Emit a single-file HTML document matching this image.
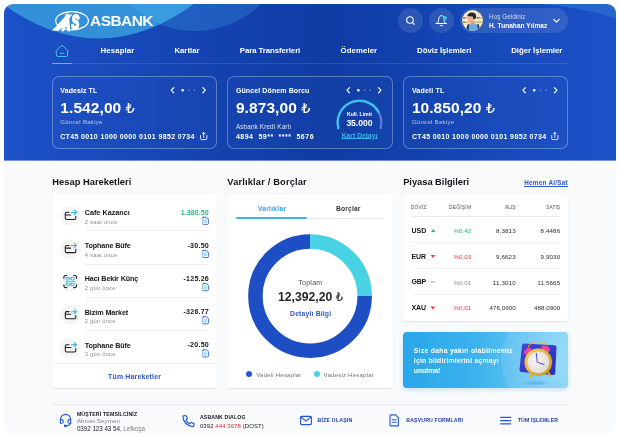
<!DOCTYPE html>
<html lang="tr"><head><meta charset="utf-8"><title>Asbank</title>
<style>
*{box-sizing:border-box;margin:0;padding:0}
html,body{width:620px;height:437px;background:#fff;overflow:hidden}
body{font-family:"Liberation Sans","DejaVu Sans",sans-serif;color:#15171c;position:relative}
#app{position:absolute;left:4px;top:4px;width:612px;height:428.8px;border-radius:9px;background:#f9fafc;overflow:hidden}
#p{position:absolute;left:-4px;top:-4px;width:620px;height:437px;will-change:transform}
.a{position:absolute;white-space:pre;line-height:1}
.card{position:absolute;background:#fff;border-radius:3.5px;box-shadow:0 .8px 1.6px rgba(30,30,50,.10)}
.hc{position:absolute;top:76px;height:72.9px;border:1px solid rgba(255,255,255,.3);border-radius:7px;background:rgba(255,255,255,.015)}
.ln{position:absolute;height:1px;background:#efeff3}
.ic{position:absolute;width:20.4px;height:20.4px;border-radius:50%;background:#f5f5f6}
</style></head><body>
<div id="app"><div id="p">
<!-- header background -->
<svg class="a" style="left:0;top:0" width="620" height="161" viewBox="0 0 620 161">
 <defs>
  <linearGradient id="hg" x1="4" x2="616" gradientUnits="userSpaceOnUse"><stop offset="0" stop-color="#1d51c8"/><stop offset=".26" stop-color="#1646b5"/><stop offset=".53" stop-color="#0f3ba4"/><stop offset=".79" stop-color="#1548b8"/><stop offset="1" stop-color="#1d51c8"/></linearGradient>
  <linearGradient id="e2" x1="120" x2="262" gradientUnits="userSpaceOnUse"><stop offset="0" stop-color="#2b76d2"/><stop offset=".55" stop-color="#2463c9"/><stop offset="1" stop-color="#1c50bf"/></linearGradient>
  <linearGradient id="e1" x1="4" x2="196" gradientUnits="userSpaceOnUse"><stop offset="0" stop-color="#328fd8"/><stop offset="1" stop-color="#3392d9"/></linearGradient>
 </defs>
 <rect x="0" y="0" width="620" height="160.6" fill="url(#hg)"/>
 <path d="M-11.7 -7.1 Q98.3 84.3 208.3 -7.1Z" fill="url(#e1)"/>
 <ellipse cx="195" cy="-50" rx="88" ry="81" fill="rgba(80,200,255,.2)"/>
 <path d="M533 3.6 Q580 6.6 616 18.6 L620 18.6 L620 0 L533 0Z" fill="#2567cd"/>
</svg>
<!-- logo emblem -->
<svg class="a" style="left:48px;top:6px" width="50" height="30" viewBox="48 6 50 30">
 <ellipse cx="72.05" cy="20.7" rx="16.35" ry="9.1" fill="none" stroke="#fff" stroke-width="1.2"/>
 <path d="M52 30.7 L66.9 14.4 L72.4 14.4 L58.9 30.7Z" fill="#fff"/>
 <g font-family="Liberation Sans, sans-serif" font-weight="bold" font-style="italic" fill="#fff" stroke="#fff" stroke-linejoin="round">
  <text transform="translate(62.3 30.3) scale(.5 1)" font-size="22.4" stroke-width="2.6">A</text>
  <text transform="translate(71.5 29.4) scale(.56 1)" font-size="20.6" stroke-width="2.2">S</text>
 </g>
</svg>
<!-- top-right controls -->
<div class="a" style="left:397.8px;top:8.2px;width:25.2px;height:25.2px;border-radius:50%;background:rgba(255,255,255,.11)"></div>
<div class="a" style="left:428.8px;top:8.2px;width:25.2px;height:25.2px;border-radius:50%;background:rgba(255,255,255,.11)"></div>
<div class="a" style="left:460.3px;top:8px;width:108px;height:25px;border-radius:13px;background:rgba(255,255,255,.11)"></div>
<svg class="a" style="left:404.2px;top:14.4px" width="13" height="13" viewBox="0 0 13 13" fill="none" stroke="#fff" stroke-width="1.1" stroke-linecap="round"><circle cx="6" cy="6" r="3.3"/><path d="M8.5 8.6 L10.2 10.3"/></svg>
<svg class="a" style="left:433px;top:12px" width="17" height="17" viewBox="433 12 17 17" fill="none" stroke="#fff" stroke-width="1" stroke-linecap="round" stroke-linejoin="round"><path d="M436.2 23.5 C438.4 23.2 438.5 21.5 438.7 19.2 C438.9 17 439.9 15.7 441.6 15.7 C442.4 15.7 443 16 443.4 16.4 M444.3 20.6 C444.4 22.2 444.8 23.2 446.2 23.5 M436 23.5 H446.3 M440.2 25.6 H442.5"/><circle cx="444.9" cy="18" r="1.95" fill="#3fd0ee" stroke="none"/></svg>
<!-- avatar -->
<svg class="a" style="left:461.9px;top:10.1px" width="21" height="21" viewBox="0 0 21 21">
 <defs><clipPath id="av"><circle cx="10.5" cy="10.5" r="10.4"/></clipPath></defs>
 <g clip-path="url(#av)">
  <rect width="21" height="21" fill="#fae7c0"/>
  <rect x="0" y="3.4" width="21" height="1.2" fill="#e9dcc0"/>
  <rect x="0" y="7.2" width="21" height="1.3" fill="#b9b39c"/>
  <rect x="1" y="7.2" width="2" height="1.3" fill="#6b7068"/><rect x="14.5" y="7.2" width="3" height="1.3" fill="#7d8078"/>
  <rect x="0" y="11.6" width="21" height="1.2" fill="#c9b88a"/>
  <rect x="0.5" y="11.6" width="3" height="1.2" fill="#7c7a66"/><rect x="15" y="11.6" width="4" height="1.2" fill="#d8b552"/>
  <path d="M3.4 21 C3.8 16 6 13.4 10 13.2 C14.6 13 17.2 15.4 17.6 21Z" fill="#68abe0"/>
  <path d="M8.8 11.6 L12 11 L12.2 13.6 L10.4 15.2 L8.6 13.4Z" fill="#dd9672"/>
  <path d="M4.8 19.4 L5.4 14.8 L7 13.9 L7 19.8Z M15.2 13.7 L17 14.5 L17.6 18.4 L15.8 18.8Z" fill="#2c385a"/>
  <path d="M6 6 C7 6.4 9 6.6 10.4 6.2 C11 7 11.4 8 11.6 9.6 C11.5 11.4 10.2 13 8.7 13 C7 12.8 6 10.6 5.8 8.6Z" fill="#efb194"/>
  <path d="M5.2 6.8 C5.3 3.6 8 2.3 10.4 2.4 C13 2.5 14.5 4.4 14.1 6.9 C13.8 8.5 13 9.3 11.6 9.5 C11.4 8 11 7 10.4 6.2 C9 6.6 7 6.4 6 6Z" fill="#26262e"/>
 </g>
</svg>
<svg class="a" style="left:551.5px;top:17.7px" width="9" height="6" viewBox="0 0 9 6" fill="none" stroke="#fff" stroke-width="1.1" stroke-linecap="round" stroke-linejoin="round"><path d="M1.7 1.3 L4.5 4.1 L7.3 1.3"/></svg>
<!-- nav -->
<svg class="a" style="left:54px;top:43px" width="16" height="16" viewBox="54 43 16 16" fill="none" stroke="#46c4ee" stroke-width="1" stroke-linejoin="round" stroke-linecap="round"><path d="M56.4 50.2 L62 45.2 L67.6 50.2 V55.2 Q67.6 56.5 66.3 56.5 H57.7 Q56.4 56.5 56.4 55.2Z"/><path d="M60.5 53.3 H63.5"/></svg>
<div class="a" style="left:52px;top:63.4px;width:516px;height:.8px;background:rgba(255,255,255,.11)"></div>
<div class="a" style="left:52px;top:62.6px;width:20px;height:1.6px;border-radius:1px;background:#46c4ee"></div>
<!-- header cards -->
<div class="hc" style="left:52px;width:165.3px"></div>
<div class="hc" style="left:227px;width:165.6px"></div>
<div class="hc" style="left:403.2px;width:164.6px"></div>
<!-- header card widgets -->
<svg class="a" style="left:0;top:70px" width="620" height="90" viewBox="0 70 620 90" fill="none" stroke="#fff" stroke-linecap="round" stroke-linejoin="round">
 <g id="pg" stroke-width="1.15">
  <path d="M173.8 87.6 L171.3 90.25 L173.8 92.9"/><path d="M202.8 87.6 L205.3 90.25 L202.8 92.9"/>
  <circle cx="182.6" cy="90.2" r="1.25" fill="#fff" stroke="none"/><circle cx="188.9" cy="90.2" r=".7" fill="#fff" fill-opacity=".45" stroke="none"/><circle cx="194.4" cy="90.2" r=".7" fill="#fff" fill-opacity=".45" stroke="none"/>
 </g>
 <use href="#pg" x="175.7"/><use href="#pg" x="351.6"/>
 <g id="sh" stroke-width=".85"><path d="M200.5 135.4 V138.6 Q200.5 139.6 201.5 139.6 H205.8 Q206.8 139.6 206.8 138.6 V135.4 M203.65 137.4 V132.5 M202.25 133.75 L203.65 132.35 L205.05 133.75"/></g>
 <use href="#sh" x="351.2"/>
 <!-- gauge -->
 <path d="M338.4 128.1 A21.8 21.8 0 1 1 380.6 128.1" stroke="#5b7cd6" stroke-width="2.2"/>
 <path d="M338.4 128.1 A21.8 21.8 0 0 1 378.4 111.7" stroke="#38c2ea" stroke-width="2.2"/>
</svg>
<!-- body cards -->
<div class="card" style="left:52px;top:194px;width:165.2px;height:193.6px"></div>
<div class="card" style="left:227.3px;top:194px;width:165.3px;height:193.6px"></div>
<div class="card" style="left:403px;top:194px;width:164.8px;height:127px"></div>
<!-- left list -->
<div class="ic" style="left:60px;top:205.6px"></div>
<div class="ic" style="left:60px;top:238.7px"></div>
<div class="ic" style="left:60px;top:271.8px"></div>
<div class="ic" style="left:60px;top:304.9px"></div>
<div class="ic" style="left:60px;top:338px"></div>
<div class="ln" style="left:84.7px;top:230.4px;width:124.5px"></div>
<div class="ln" style="left:84.7px;top:263.6px;width:124.5px"></div>
<div class="ln" style="left:84.7px;top:296.8px;width:124.5px"></div>
<div class="ln" style="left:84.7px;top:330px;width:124.5px"></div>
<div class="ln" style="left:52px;top:363.2px;width:165.2px"></div>
<svg class="a" style="left:0;top:190px" width="230" height="200" viewBox="0 190 230 200" fill="none" stroke-linecap="round" stroke-linejoin="round">
 <g id="tr" stroke-width="1.05">
  <path d="M69 212.3 H66.5 Q65.3 212.3 65.3 213.5 V218.3 Q65.3 219.5 66.5 219.5 H74.6 Q75.8 219.5 75.8 218.3 V216.2 M65.5 215 H70.8" stroke="#1c1d22"/>
  <path d="M71.3 212.4 H76.3 M74.3 210.2 L76.5 212.4 L74.3 214.6" stroke="#2eb5d8"/>
 </g>
 <use href="#tr" y="33.1"/><use href="#tr" y="99.3"/><use href="#tr" y="132.4"/>
 <!-- qr icon -->
 <g stroke-width="1.05">
  <path d="M63.9 278.2 V277 Q63.9 275.4 65.5 275.4 H66.7 M73.7 275.4 H74.9 Q76.5 275.4 76.5 277 V278.2 M76.5 284.8 V286 Q76.5 287.6 74.9 287.6 H73.7 M66.7 287.6 H65.5 Q63.9 287.6 63.9 286 V284.8" stroke="#1c1d22"/>
  <g stroke="#2eb5d8" stroke-width=".9">
   <rect x="66.2" y="277.4" width="2.9" height="2.7" rx=".5"/><rect x="71.3" y="277.4" width="2.9" height="2.7" rx=".5"/>
   <rect x="66.2" y="283.1" width="2.9" height="2.7" rx=".5"/><rect x="71.3" y="283.1" width="2.9" height="2.7" rx=".5"/>
   <path d="M66 281.6 H67.4 M69.2 281.6 H71.2 M73 281.6 H74.4 M70.2 277.6 V279.4 M70.2 283.6 V285.6"/>
  </g>
 </g>
 <!-- doc icons -->
 <g id="dc" stroke-width=".85">
  <path d="M203.3 217.2 H206.5 L208.4 219.1 V223.5 Q208.4 224.4 207.5 224.4 H203.5 Q202.6 224.4 202.6 223.5 V217.9 Q202.6 217.2 203.3 217.2Z" fill="#fff" stroke="#2a57c8"/>
  <path d="M202.6 218.4 V223.4" stroke="#b4c3ee" stroke-width=".9"/>
  <rect x="203.9" y="218.9" width="2.9" height="4.2" fill="#a3e2ee" stroke="none"/>
 </g>
 <use href="#dc" y="33.15"/><use href="#dc" y="66.3"/><use href="#dc" y="99.45"/><use href="#dc" y="132.6"/>
</svg>
<!-- middle card -->
<div class="a" style="left:235.8px;top:217.6px;width:148.5px;height:.9px;background:#e6e7ec"></div>
<div class="a" style="left:235.8px;top:217.2px;width:71.2px;height:1.5px;border-radius:1px;background:#44aee8"></div>
<svg class="a" style="left:240px;top:226px" width="140" height="140" viewBox="240 226 140 140" fill="none">
 <path d="M364.67 296.05 A54.62 54.62 0 1 1 310.05 241.43" stroke="#1e4ec4" stroke-width="14.55"/>
 <path d="M310.05 241.43 A54.62 54.62 0 0 1 364.67 296.05" stroke="#49d2e4" stroke-width="14.55"/>
</svg>
<div class="a" style="left:246px;top:371.3px;width:6px;height:6px;border-radius:50%;background:#2359d6"></div>
<div class="a" style="left:313.8px;top:371.3px;width:6px;height:6px;border-radius:50%;background:#47d0e6"></div>
<!-- table -->
<div class="ln" style="left:410.8px;top:215.8px;width:148.8px;background:#ebebef"></div>
<div class="ln" style="left:410.8px;top:241.9px;width:148.8px;background:#f2f2f5"></div>
<div class="ln" style="left:410.8px;top:267.9px;width:148.8px;background:#f2f2f5"></div>
<div class="ln" style="left:410.8px;top:293.8px;width:148.8px;background:#f3f3f6"></div>
<svg class="a" style="left:428px;top:224px" width="12" height="90" viewBox="428 224 12 90">
 <path d="M430.8 231.9 L433.2 228.9 L435.6 231.9Z" fill="#1fbf75"/>
 <path d="M430.6 254.9 L435.2 254.9 L432.9 257.9Z" fill="#f0323c"/>
 <path d="M430.3 282 H435" stroke="#9a9ca2" stroke-width="1"/>
 <path d="M430.6 306.5 L435.2 306.5 L432.9 309.5Z" fill="#f0323c"/>
</svg>
<!-- banner -->
<div class="a" style="left:403px;top:331.6px;width:165.3px;height:56.4px;border-radius:4px;background:linear-gradient(90deg,#29a6ea 0%,#3db3ee 45%,#7fd1f6 100%);box-shadow:0 2px 4px rgba(60,160,230,.25);overflow:hidden">
 <div class="a" style="left:98px;top:-24px;width:104px;height:104px;border-radius:50%;background:radial-gradient(circle,rgba(255,255,255,.22) 0%,rgba(255,255,255,.10) 70%,rgba(255,255,255,.08) 100%)"></div>
</div>
<svg class="a" style="left:510px;top:334px" width="58" height="54" viewBox="510 334 58 54">
 <defs>
  <linearGradient id="sq" x1="0" y1="0" x2="1" y2="1"><stop offset="0" stop-color="#4149d6"/><stop offset="1" stop-color="#2a2fb4"/></linearGradient>
  <radialGradient id="fc" cx=".42" cy=".4" r=".75"><stop offset="0" stop-color="#f7f4f1"/><stop offset="1" stop-color="#dcd6d4"/></radialGradient>
  <linearGradient id="gd" x1="0" y1="0" x2="1" y2="1"><stop offset="0" stop-color="#f6d35a"/><stop offset=".5" stop-color="#e9b62c"/><stop offset="1" stop-color="#c98f12"/></linearGradient>
  <radialGradient id="shd" cx=".5" cy=".5" r=".5"><stop offset="0" stop-color="#2f8fd0" stop-opacity=".5"/><stop offset="1" stop-color="#2f8fd0" stop-opacity="0"/></radialGradient>
 </defs>
 <ellipse cx="536.4" cy="383" rx="15" ry="2.6" fill="url(#shd)"/>
 <path d="M524.4 343.4 L554.4 345.2 Q556.6 345.4 556.5 347.6 L555.2 373 Q555 375.3 552.8 375.1 L521.5 372 Q519.3 371.8 519.5 369.6 L522 345.4 Q522.3 343.3 524.4 343.4Z" fill="url(#sq)"/>
 <path d="M528 347.4 C530 343.4 534 341.5 538 341.6 C542 341.7 545.6 343 547.8 345.4" fill="none" stroke="#e9b62c" stroke-width="1"/>
 <ellipse cx="527.8" cy="351.2" rx="4.2" ry="2.7" fill="#e8479c" transform="rotate(-38 527.8 351.2)"/>
 <ellipse cx="545.7" cy="348.7" rx="4.7" ry="2.7" fill="#e8479c" transform="rotate(28 545.7 348.7)"/>
 <path d="M532 374 L530 377.8 M547.6 371.6 L550.4 375.8" stroke="#e2ad25" stroke-width="1.8" stroke-linecap="round"/>
 <circle cx="538.3" cy="362.3" r="13.8" fill="url(#gd)"/>
 <circle cx="538.3" cy="362.3" r="11.3" fill="url(#fc)"/>
 <circle cx="538.3" cy="362.3" r="11.3" fill="none" stroke="#b98414" stroke-width=".5" opacity=".55"/>
 <path d="M537.3 362.3 L536.3 353.4 M537.3 362.3 L544 364.5" stroke="#4a56e2" stroke-width="1.1" stroke-linecap="round"/>
 <circle cx="537.3" cy="362.3" r=".7" fill="#f0a060"/>
</svg>
<!-- footer -->
<div class="a" style="left:52.4px;top:403.5px;width:515.4px;height:1px;background:#ebecf0"></div>
<svg class="a" style="left:55px;top:410px" width="520" height="22" viewBox="55 410 520 22" fill="none" stroke="#2558d8" stroke-width="1.1" stroke-linecap="round" stroke-linejoin="round">
 <!-- headset -->
 <path d="M60.4 422.9 V419.5 A5.15 5.15 0 0 1 70.7 419.5 V422.9"/>
 <path d="M60.4 419.6 H61.5 Q63.3 419.6 63.3 421.4 Q63.3 423.2 61.5 423.2 H60.4 M70.7 419.6 H69.6 Q67.8 419.6 67.8 421.4 Q67.8 423.2 69.6 423.2 H70.7"/>
 <path d="M70.4 423.3 Q69.8 425.6 66.2 425.9"/><circle cx="65.3" cy="425.9" r=".8" fill="#2558d8"/>
 <!-- phone -->
 <path d="M183.6 415.9 L185.4 415.5 Q186 415.4 186.3 416 L187.2 418.1 Q187.4 418.6 187 419 L185.9 419.9 Q187 422.5 189.6 423.8 L190.6 422.7 Q191 422.3 191.5 422.5 L193.6 423.4 Q194.2 423.7 194.1 424.3 L193.7 426 Q193.5 426.6 192.8 426.6 Q188.8 426.4 185.9 423.5 Q183.1 420.5 183 416.7 Q183 416.1 183.6 415.9Z" stroke-width="1.2"/>
 <!-- mail -->
 <rect x="300.6" y="416.4" width="10.8" height="8.2" rx="1"/><path d="M300.9 417 L306 421.2 L311.1 417"/>
 <!-- doc -->
 <path d="M391 414.9 H395.6 L398.4 417.7 V424.9 Q398.4 425.9 397.4 425.9 H391 Q390 425.9 390 424.9 V415.9 Q390 414.9 391 414.9Z M392.2 419.8 H396.2 M392.2 422.2 H396.2"/>
 <!-- menu -->
 <path d="M500.6 417.4 H510.8 M500.6 420.6 H510.8 M500.6 423.8 H510.8" stroke-width="1.15"/>
</svg>

<div class="a" id="t0" style="top:13.80px;font-size:14.8px;color:#fff;font-weight:bold;letter-spacing:-0.502px;left:89.70px;transform:scaleX(1.045);transform-origin:0 50%;">ASBANK</div>
<div class="a" id="t1" style="top:47.20px;font-size:7.8px;color:#fff;font-weight:bold;letter-spacing:0.131px;left:100.50px;">Hesaplar</div>
<div class="a" id="t2" style="top:47.20px;font-size:7.8px;color:#fff;font-weight:bold;letter-spacing:0.008px;left:174.40px;">Kartlar</div>
<div class="a" id="t3" style="top:47.20px;font-size:7.8px;color:#fff;font-weight:bold;letter-spacing:-0.067px;left:239.80px;">Para Transferleri</div>
<div class="a" id="t4" style="top:47.20px;font-size:7.8px;color:#fff;font-weight:bold;letter-spacing:0.089px;left:340.50px;">Ödemeler</div>
<div class="a" id="t5" style="top:47.20px;font-size:7.8px;color:#fff;font-weight:bold;letter-spacing:-0.027px;left:417.10px;">Döviz İşlemleri</div>
<div class="a" id="t6" style="top:47.20px;font-size:7.8px;color:#fff;font-weight:bold;letter-spacing:-0.034px;left:511.20px;">Diğer İşlemler</div>
<div class="a" id="t7" style="top:13.50px;font-size:6.4px;color:rgba(255,255,255,.72);left:489.10px;">Hoş Geldiniz</div>
<div class="a" id="t8" style="top:22.75px;font-size:6.5px;color:#fff;font-weight:bold;letter-spacing:0.060px;left:489.10px;">H. Tunahan Yılmaz</div>
<div class="a" id="t9" style="top:86.70px;font-size:7px;color:#fff;font-weight:bold;letter-spacing:0.081px;left:60.30px;">Vadesiz TL</div>
<div class="a" id="t10" style="top:100.25px;font-size:15.5px;color:#fff;font-weight:bold;letter-spacing:0.082px;left:60.30px;">1.542,00</div>
<div class="a" id="t11" style="top:100.70px;font-size:14.6px;color:#fff;left:125.60px;font-family:'DejaVu Sans',sans-serif;">₺</div>
<div class="a" id="t12" style="top:86.70px;font-size:7px;color:#fff;font-weight:bold;letter-spacing:0.112px;left:235.90px;">Güncel Dönem Borcu</div>
<div class="a" id="t13" style="top:100.25px;font-size:15.5px;color:#fff;font-weight:bold;letter-spacing:0.082px;left:235.90px;">9.873,00</div>
<div class="a" id="t14" style="top:100.70px;font-size:14.6px;color:#fff;left:301.20px;font-family:'DejaVu Sans',sans-serif;">₺</div>
<div class="a" id="t15" style="top:86.70px;font-size:7px;color:#fff;font-weight:bold;letter-spacing:0.196px;left:411.90px;">Vadeli TL</div>
<div class="a" id="t16" style="top:100.25px;font-size:15.5px;color:#fff;font-weight:bold;letter-spacing:0.059px;left:411.90px;">10.850,20</div>
<div class="a" id="t17" style="top:100.70px;font-size:14.6px;color:#fff;left:485.70px;font-family:'DejaVu Sans',sans-serif;">₺</div>
<div class="a" id="t18" style="top:118.80px;font-size:6px;color:rgba(255,255,255,.66);letter-spacing:0.293px;left:60.20px;">Güncel Bakiye</div>
<div class="a" id="t19" style="top:132.90px;font-size:7px;color:#fff;font-weight:bold;letter-spacing:0.364px;left:60.20px;">CT45 0010 1000 0000 0101 9852 0734</div>
<div class="a" id="t20" style="top:118.80px;font-size:6px;color:rgba(255,255,255,.66);letter-spacing:0.293px;left:411.90px;">Güncel Bakiye</div>
<div class="a" id="t21" style="top:132.90px;font-size:7px;color:#fff;font-weight:bold;letter-spacing:0.364px;left:411.90px;">CT45 0010 1000 0000 0101 9852 0734</div>
<div class="a" id="t22" style="top:123.85px;font-size:6.3px;color:rgba(255,255,255,.85);letter-spacing:0.167px;left:235.90px;">Asbank Kredi Kartı</div>
<div class="a" id="t23" style="top:132.90px;font-size:7px;color:#fff;font-weight:bold;letter-spacing:0.511px;left:235.90px;">4894  59**  ****  5676</div>
<div class="a" id="t24" style="top:112.30px;font-size:5.2px;color:#fff;font-weight:bold;letter-spacing:-0.007px;left:359.40px;transform:translateX(-50%);margin-left:-0.004px;">Kull. Limit</div>
<div class="a" id="t25" style="top:118.90px;font-size:8.6px;color:#fff;font-weight:bold;letter-spacing:-0.049px;left:359.40px;transform:translateX(-50%);margin-left:-0.025px;">35.000</div>
<div class="a" id="t26" style="top:133.30px;font-size:6.6px;color:#36b6e6;font-weight:bold;letter-spacing:0.088px;left:359.60px;transform:translateX(-50%);margin-left:0.044px;text-decoration:underline;text-underline-offset:.4px;text-decoration-thickness:.5px;">Kart Detayı</div>
<div class="a" id="t27" style="top:178.25px;font-size:9.3px;color:#15161a;font-weight:bold;letter-spacing:0.026px;left:52.30px;">Hesap Hareketleri</div>
<div class="a" id="t28" style="top:178.25px;font-size:9.3px;color:#15161a;font-weight:bold;letter-spacing:0.163px;left:227.30px;">Varlıklar / Borçlar</div>
<div class="a" id="t29" style="top:178.25px;font-size:9.3px;color:#15161a;font-weight:bold;letter-spacing:-0.016px;left:403.20px;">Piyasa Bilgileri</div>
<div class="a" id="t30" style="top:180.05px;font-size:6.3px;color:#2a58cc;font-weight:bold;letter-spacing:0.287px;right:52.30px;margin-right:-0.287px;text-decoration:underline;text-underline-offset:.5px;text-decoration-thickness:.5px;">Hemen Al/Sat</div>
<div class="a" id="t31" style="top:209.20px;font-size:7.2px;color:#15161a;font-weight:bold;letter-spacing:0.029px;left:84.70px;">Cafe Kazancı</div>
<div class="a" id="t32" style="top:219.80px;font-size:5.8px;color:#8a8d94;letter-spacing:0.256px;left:84.70px;">2 saat önce</div>
<div class="a" id="t33" style="top:209.75px;font-size:7.1px;color:#1fbf75;font-weight:bold;letter-spacing:0.072px;right:411.20px;margin-right:-0.072px;">1.380.50</div>
<div class="a" id="t34" style="top:242.30px;font-size:7.2px;color:#15161a;font-weight:bold;letter-spacing:-0.116px;left:84.70px;">Tophane Büfe</div>
<div class="a" id="t35" style="top:252.90px;font-size:5.8px;color:#8a8d94;letter-spacing:0.256px;left:84.70px;">4 saat önce</div>
<div class="a" id="t36" style="top:242.85px;font-size:7.1px;color:#15161a;font-weight:bold;letter-spacing:0.229px;right:411.20px;margin-right:-0.229px;">-30.50</div>
<div class="a" id="t37" style="top:275.40px;font-size:7.2px;color:#15161a;font-weight:bold;letter-spacing:-0.108px;left:84.70px;">Hacı Bekir Künç</div>
<div class="a" id="t38" style="top:286.00px;font-size:5.8px;color:#8a8d94;letter-spacing:0.231px;left:84.70px;">2 gün önce</div>
<div class="a" id="t39" style="top:275.95px;font-size:7.1px;color:#15161a;font-weight:bold;letter-spacing:0.205px;right:411.20px;margin-right:-0.205px;">-125.26</div>
<div class="a" id="t40" style="top:308.50px;font-size:7.2px;color:#15161a;font-weight:bold;letter-spacing:-0.070px;left:84.70px;">Bizim Market</div>
<div class="a" id="t41" style="top:319.10px;font-size:5.8px;color:#8a8d94;letter-spacing:0.231px;left:84.70px;">2 gün önce</div>
<div class="a" id="t42" style="top:309.05px;font-size:7.1px;color:#15161a;font-weight:bold;letter-spacing:0.205px;right:411.20px;margin-right:-0.205px;">-326.77</div>
<div class="a" id="t43" style="top:341.60px;font-size:7.2px;color:#15161a;font-weight:bold;letter-spacing:-0.116px;left:84.70px;">Tophane Büfe</div>
<div class="a" id="t44" style="top:352.20px;font-size:5.8px;color:#8a8d94;letter-spacing:0.231px;left:84.70px;">3 gün önce</div>
<div class="a" id="t45" style="top:342.15px;font-size:7.1px;color:#15161a;font-weight:bold;letter-spacing:0.229px;right:411.20px;margin-right:-0.229px;">-20.50</div>
<div class="a" id="t46" style="top:372.90px;font-size:7px;color:#2a57c8;font-weight:bold;letter-spacing:0.145px;left:134.50px;transform:translateX(-50%);margin-left:0.072px;">Tüm Hareketler</div>
<div class="a" id="t47" style="top:205.95px;font-size:6.7px;color:#3aa0e2;font-weight:bold;letter-spacing:0.274px;left:272.00px;transform:translateX(-50%);margin-left:0.137px;">Varlıklar</div>
<div class="a" id="t48" style="top:205.95px;font-size:6.7px;color:#33363c;font-weight:bold;letter-spacing:0.154px;left:348.30px;transform:translateX(-50%);margin-left:0.077px;">Borçlar</div>
<div class="a" id="t49" style="top:279.00px;font-size:7px;color:#4a4d55;letter-spacing:0.270px;left:310.20px;transform:translateX(-50%);margin-left:0.135px;">Toplam</div>
<div class="a" id="t50" style="top:290.70px;font-size:12.2px;color:#24262b;font-weight:bold;letter-spacing:0.030px;left:277.90px;">12,392,20</div>
<div class="a" id="t51" style="top:291.70px;font-size:11.4px;color:#24262b;left:335.80px;font-family:'DejaVu Sans',sans-serif;">₺</div>
<div class="a" id="t52" style="top:311.30px;font-size:6.8px;color:#2a58cc;font-weight:bold;letter-spacing:0.176px;left:310.60px;transform:translateX(-50%);margin-left:0.088px;">Detaylı Bilgi</div>
<div class="a" id="t53" style="top:371.60px;font-size:6px;color:#6f727a;letter-spacing:0.225px;left:256.30px;">Vadeli Hesaplar</div>
<div class="a" id="t54" style="top:371.60px;font-size:6px;color:#6f727a;letter-spacing:0.244px;left:323.60px;">Vadesiz Hesaplar</div>
<div class="a" id="t55" style="top:206.15px;font-size:4.9px;color:#50535b;letter-spacing:0.209px;left:410.80px;">DÖVİZ</div>
<div class="a" id="t56" style="top:206.15px;font-size:4.9px;color:#50535b;letter-spacing:0.206px;left:449.10px;">DEĞİŞİM</div>
<div class="a" id="t57" style="top:206.15px;font-size:4.9px;color:#50535b;letter-spacing:0.023px;right:104.40px;margin-right:-0.023px;">ALIŞ</div>
<div class="a" id="t58" style="top:206.15px;font-size:4.9px;color:#50535b;right:59.90px;margin-right:-0.004px;">SATIŞ</div>
<div class="a" id="t59" style="top:226.80px;font-size:7px;color:#15161a;font-weight:bold;letter-spacing:-0.027px;left:411.50px;">USD</div>
<div class="a" id="t60" style="top:228.20px;font-size:6.2px;color:#1fbf75;letter-spacing:0.051px;right:148.80px;margin-right:-0.051px;">%0,42</div>
<div class="a" id="t61" style="top:228.20px;font-size:6.2px;color:#2b2d33;letter-spacing:0.114px;right:104.40px;margin-right:-0.114px;">8,3813</div>
<div class="a" id="t62" style="top:228.20px;font-size:6.2px;color:#2b2d33;letter-spacing:0.114px;right:59.90px;margin-right:-0.114px;">8,4486</div>
<div class="a" id="t63" style="top:252.55px;font-size:7px;color:#15161a;font-weight:bold;letter-spacing:-0.160px;left:411.50px;">EUR</div>
<div class="a" id="t64" style="top:253.95px;font-size:6.2px;color:#ee3b45;letter-spacing:0.051px;right:148.80px;margin-right:-0.051px;">%0,03</div>
<div class="a" id="t65" style="top:253.95px;font-size:6.2px;color:#2b2d33;letter-spacing:0.114px;right:104.40px;margin-right:-0.114px;">9,6623</div>
<div class="a" id="t66" style="top:253.95px;font-size:6.2px;color:#2b2d33;letter-spacing:0.114px;right:59.90px;margin-right:-0.114px;">9,9030</div>
<div class="a" id="t67" style="top:278.30px;font-size:7px;color:#15161a;font-weight:bold;letter-spacing:-0.191px;left:411.50px;">GBP</div>
<div class="a" id="t68" style="top:279.70px;font-size:6.2px;color:#8a8d94;letter-spacing:0.051px;right:148.80px;margin-right:-0.051px;">%0,01</div>
<div class="a" id="t69" style="top:279.70px;font-size:6.2px;color:#2b2d33;letter-spacing:0.141px;right:104.40px;margin-right:-0.141px;">11,3010</div>
<div class="a" id="t70" style="top:279.70px;font-size:6.2px;color:#2b2d33;letter-spacing:0.141px;right:59.90px;margin-right:-0.141px;">11,5665</div>
<div class="a" id="t71" style="top:304.05px;font-size:7px;color:#15161a;font-weight:bold;letter-spacing:-0.060px;left:411.50px;">XAU</div>
<div class="a" id="t72" style="top:305.45px;font-size:6.2px;color:#ee3b45;letter-spacing:0.051px;right:148.80px;margin-right:-0.051px;">%0,01</div>
<div class="a" id="t73" style="top:305.45px;font-size:6.2px;color:#2b2d33;letter-spacing:0.043px;right:104.40px;margin-right:-0.043px;">476,0900</div>
<div class="a" id="t74" style="top:305.45px;font-size:6.2px;color:#2b2d33;letter-spacing:0.043px;right:59.90px;margin-right:-0.043px;">488,0900</div>
<div class="a" id="t75" style="top:348.10px;font-size:6.8px;color:#fff;font-weight:bold;letter-spacing:0.288px;left:413.80px;">Size daha yakın olabilmemiz</div>
<div class="a" id="t76" style="top:358.15px;font-size:6.8px;color:#fff;font-weight:bold;letter-spacing:0.218px;left:413.80px;">için bildirimlerini açmayı</div>
<div class="a" id="t77" style="top:368.20px;font-size:6.8px;color:#fff;font-weight:bold;letter-spacing:-0.045px;left:413.80px;">unutma!</div>
<div class="a" id="t78" style="top:412.00px;font-size:5.2px;color:#17181c;font-weight:bold;letter-spacing:0.160px;left:76.90px;">MÜŞTERİ TEMSİLCİNİZ</div>
<div class="a" id="t79" style="top:418.00px;font-size:6.2px;color:#80838a;letter-spacing:0.057px;left:76.90px;">Ahmet Seymen</div>
<div class="a" id="t80" style="top:425.55px;font-size:6.3px;color:#80838a;letter-spacing:-0.054px;left:76.90px;"><span style="color:#24262b">0392 123 43 54</span>, Lefkoşa</div>
<div class="a" id="t81" style="top:414.70px;font-size:5.2px;color:#17181c;font-weight:bold;letter-spacing:0.145px;left:199.90px;">ASBANK DIALOG</div>
<div class="a" id="t82" style="top:422.95px;font-size:6.1px;color:#24262b;letter-spacing:0.027px;left:199.90px;">0392 <span style="color:#e8303c">444 3678</span> (DOST)</div>
<div class="a" id="t83" style="top:418.00px;font-size:5.2px;color:#1f3fa6;font-weight:bold;letter-spacing:0.202px;left:317.60px;">BİZE ULAŞIN</div>
<div class="a" id="t84" style="top:418.00px;font-size:5.2px;color:#1f3fa6;font-weight:bold;letter-spacing:0.152px;left:406.30px;">BAŞVURU FORMLARI</div>
<div class="a" id="t85" style="top:418.00px;font-size:5.2px;color:#1f3fa6;font-weight:bold;letter-spacing:0.116px;left:517.80px;">TÜM İŞLEMLER</div>
</div></div>
</body></html>
